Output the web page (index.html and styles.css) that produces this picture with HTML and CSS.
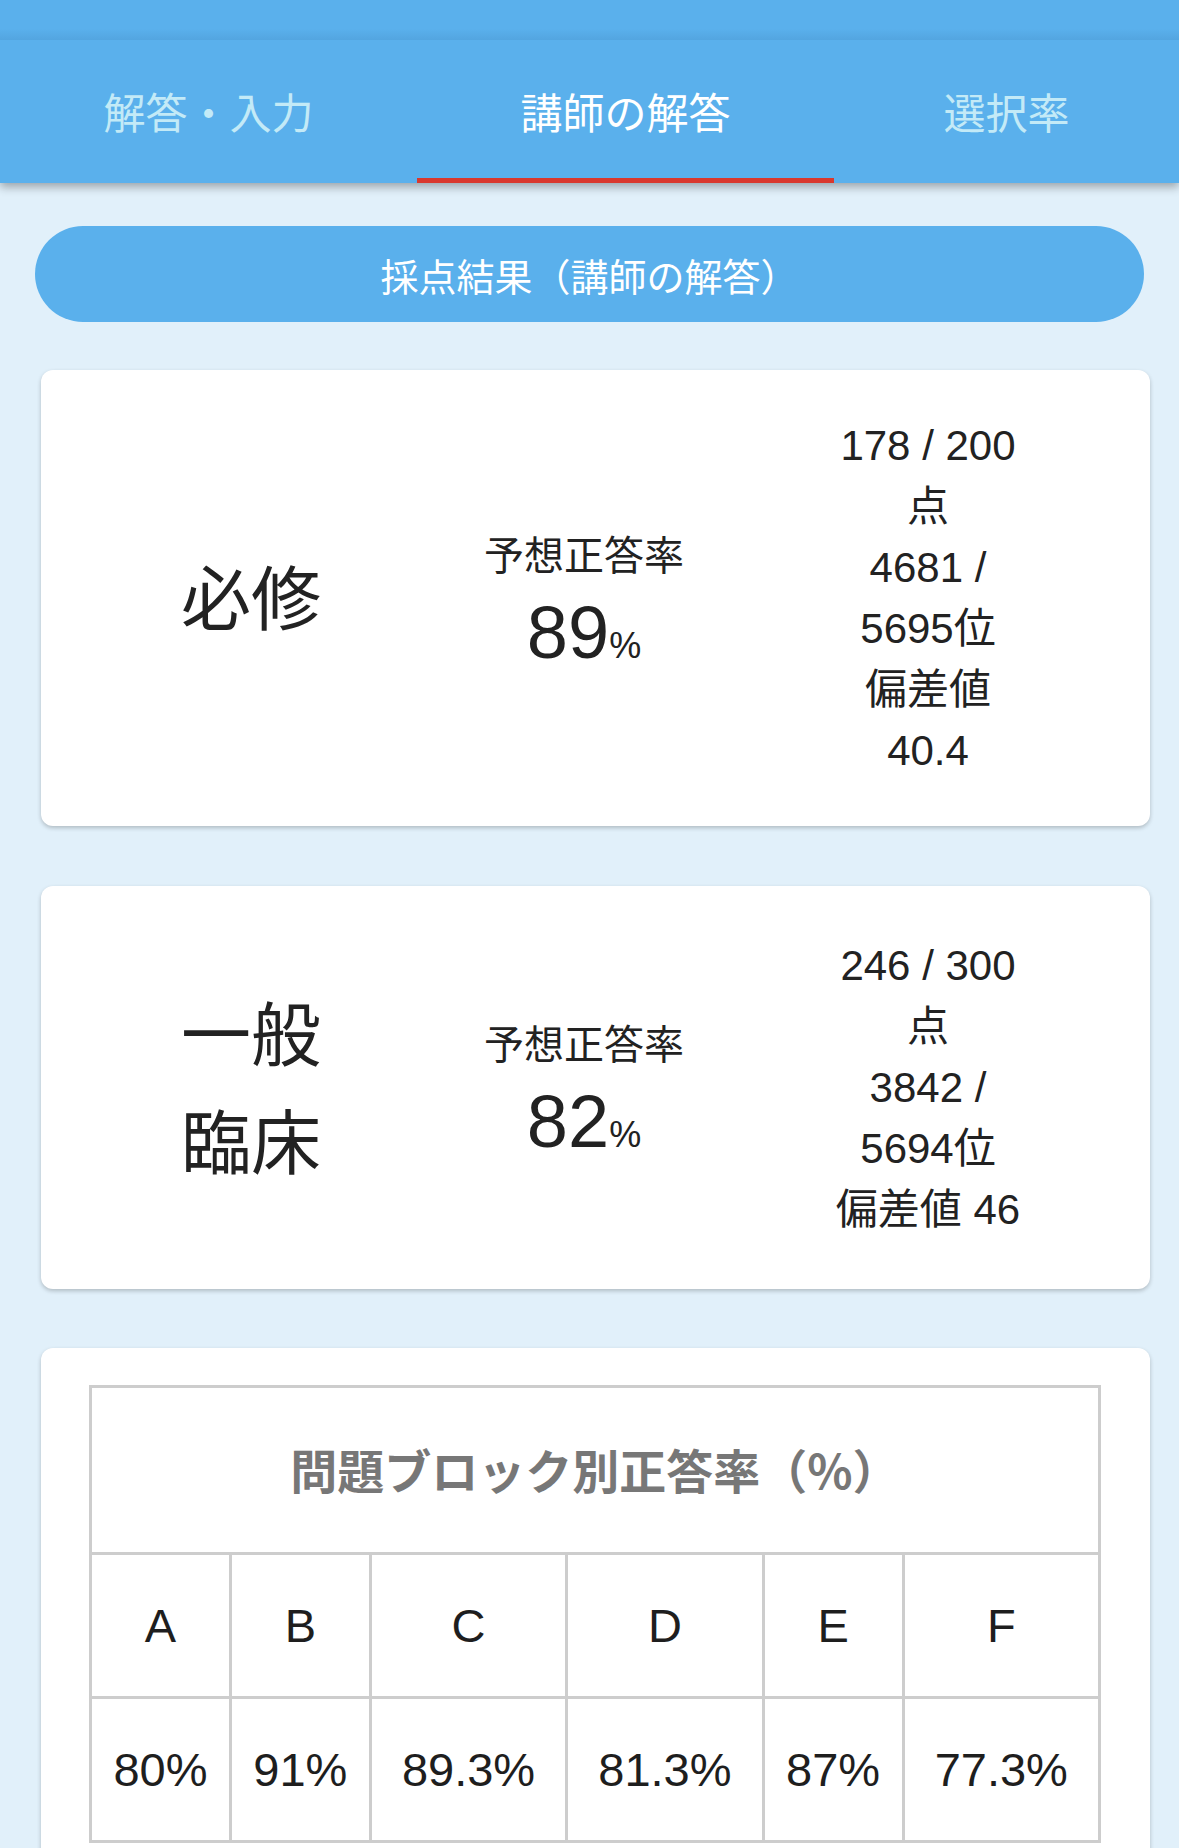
FILE: index.html
```html
<!DOCTYPE html>
<html lang="ja">
<head>
<meta charset="utf-8">
<title>講師の解答</title>
<link rel="stylesheet" href="styles.css">
</head>
<body>
<header class="appbar">
  <div class="statusbar"></div>
  <nav class="tabs">
    <div class="tab tab-wide">解答・入力</div>
    <div class="tab tab-wide active">講師の解答</div>
    <div class="tab tab-rest">選択率</div>
  </nav>
</header>
<main class="content">
  <div class="pill">採点結果（講師の解答）</div>

  <section class="card score-card first">
    <div class="subject">必修</div>
    <div class="rate">
      <div class="rate-label">予想正答率</div>
      <div class="rate-value">89<span class="pct">%</span></div>
    </div>
    <div class="stats">
      <div>178 / 200点</div>
      <div>4681 / 5695位</div>
      <div>偏差値 40.4</div>
    </div>
  </section>

  <section class="card score-card second">
    <div class="subject">一般臨床</div>
    <div class="rate">
      <div class="rate-label">予想正答率</div>
      <div class="rate-value">82<span class="pct">%</span></div>
    </div>
    <div class="stats">
      <div>246 / 300点</div>
      <div>3842 / 5694位</div>
      <div>偏差値 46</div>
    </div>
  </section>

  <section class="card table-card">
    <table class="block-table">
      <thead>
        <tr><th colspan="6">問題ブロック別正答率（%）</th></tr>
      </thead>
      <tbody>
        <tr><td>A</td><td>B</td><td>C</td><td>D</td><td>E</td><td>F</td></tr>
        <tr><td>80%</td><td>91%</td><td>89.3%</td><td>81.3%</td><td>87%</td><td>77.3%</td></tr>
      </tbody>
    </table>
  </section>
</main>
</body>
</html>
```
FILE: styles.css
```css
html, body {
  margin: 0;
  padding: 0;
}
body {
  background: #e1f0fa;
  font-family: "Liberation Sans", "Noto Sans CJK JP", sans-serif;
  color: #222;
  width: 1179px;
}

/* ---------- app bar ---------- */
.appbar {
  background: #5ab0ec;
  box-shadow: 0 4px 9px rgba(0, 0, 0, 0.32);
  position: relative;
  z-index: 1;
}
.statusbar {
  height: 40px;
  background: linear-gradient(to bottom, #5ab0ec 0%, #5ab0ec 72%, #53a5e0 100%);
}
.tabs {
  display: flex;
  height: 143px;
}
.tab {
  display: flex;
  align-items: center;
  justify-content: center;
  box-sizing: border-box;
  border-bottom: 5px solid transparent;
  padding-top: 2px;
  font-family: "Noto Sans CJK JP", sans-serif;
  font-size: 42px;
  color: #c3eaf7;
}
.tab-wide {
  width: 417px;
}
.tab-rest {
  flex: 1;
}
.tab.active {
  color: #ffffff;
  border-bottom-color: #d9382e;
}

/* ---------- content ---------- */
.content {
  padding-top: 43px;
}
.pill {
  margin: 0 35px;
  height: 96px;
  border-radius: 48px;
  background: #5ab0ec;
  color: #ffffff;
  display: flex;
  align-items: center;
  justify-content: center;
  font-family: "Noto Sans CJK JP", sans-serif;
  font-size: 38px;
}

.card {
  background: #ffffff;
  border-radius: 12px;
  box-shadow: 0 2px 4px rgba(0, 0, 0, 0.22);
  margin: 60px 29px 0 41px;
}
.card.first {
  margin-top: 48px;
}

.score-card {
  display: flex;
  align-items: center;
  padding: 45px 0 45px 95px;
  text-align: center;
}
.score-card.second {
  padding-top: 49px;
  padding-bottom: 49px;
}
.subject {
  box-sizing: border-box;
  width: 230px;
  padding: 0 40px 6px;
  font-family: "Noto Sans CJK JP", sans-serif;
  font-size: 70px;
  line-height: 108px;
}
.rate {
  width: 436px;
  padding-top: 8px;
}
.rate-label {
  font-family: "Noto Sans CJK JP", sans-serif;
  font-size: 40px;
  line-height: 74px;
}
.rate-value {
  font-size: 74px;
  line-height: 86px;
}
.pct {
  font-size: 36px;
}
.stats {
  width: 200px;
  margin-left: 26px;
  font-size: 42px;
  line-height: 61px;
}

/* ---------- table card ---------- */
.table-card {
  margin-top: 59px;
  padding: 37px 49px 40px 48px;
}
.block-table {
  width: 100%;
  border-collapse: collapse;
  text-align: center;
}
.block-table th,
.block-table td {
  border: 3px solid #cdcdcd;
}
.block-table th {
  font-family: "Noto Sans CJK JP", sans-serif;
  font-weight: 700;
  font-size: 47px;
  line-height: 69px;
  color: #777777;
  padding: 46px 0 49px;
}
.block-table td {
  font-size: 47px;
  line-height: 69px;
  padding: 36px 0;
  color: #1e1e1e;
}
```
